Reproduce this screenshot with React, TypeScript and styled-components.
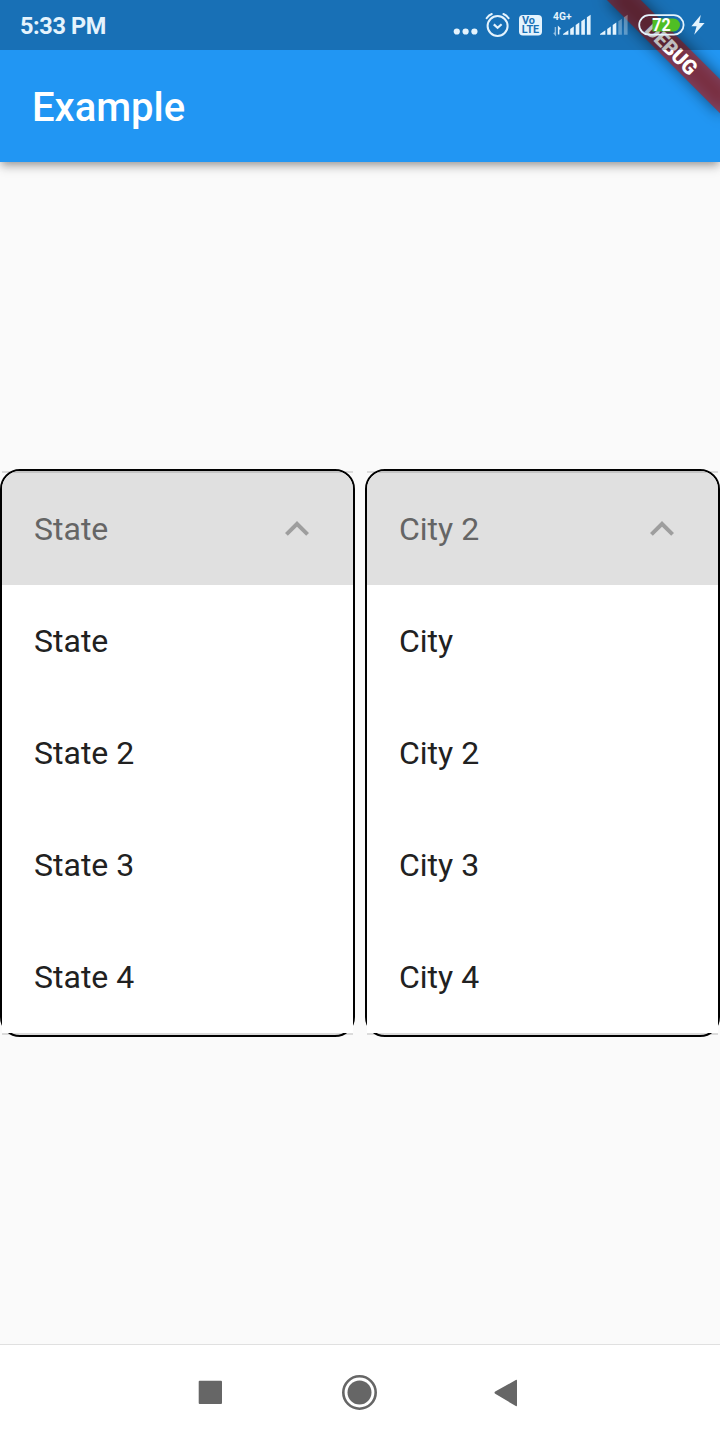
import React from 'react';
import styled, { createGlobalStyle } from 'styled-components';

const GlobalStyle = createGlobalStyle`
  * { box-sizing: border-box; }
  body { margin: 0; background: #fafafa; font-family: Roboto, sans-serif; }
`;

const Screen = styled.div`
  position: relative;
  display: flex;
  flex-direction: column;
  width: 720px;
  height: 1440px;
  overflow: hidden;
  background: #fafafa;
`;

const StatusBar = styled.div`
  position: relative;
  z-index: 3;
  flex: none;
  display: flex;
  align-items: center;
  height: 50px;
  margin-bottom: -50px;
  padding: 0 14px 0 20px;
  background: rgba(0, 0, 0, 0.25);
`;

const Clock = styled.span`
  flex: 1;
  padding-top: 2px;
  font-size: 23.5px;
  font-weight: 700;
  line-height: 28px;
  letter-spacing: -0.4px;
  color: #e4f3fd;
`;

const StatusIcons = styled.div`
  display: flex;
  height: 50px;
`;

const StatusGlyph = styled.svg`
  display: block;
  height: 50px;
  overflow: visible;
  font-family: Roboto, sans-serif;
  font-weight: 700;
`;

const AppBar = styled.header`
  position: relative;
  z-index: 1;
  flex: none;
  display: flex;
  align-items: center;
  height: 162px;
  padding: 54px 32px 0;
  background: #2196f3;
  box-shadow: 0 4px 8px -2px rgba(0, 0, 0, 0.3), 0 6px 10px rgba(0, 0, 0, 0.14);
`;

const Title = styled.h1`
  margin: 0;
  font-size: 40px;
  font-weight: 500;
  line-height: 48px;
  color: #fff;
`;

const Banner = styled.div`
  position: absolute;
  z-index: 2;
  top: 0;
  left: 720px;
  width: 0;
  height: 0;
  transform: rotate(45deg);
`;

const BannerShadow = styled.div`
  position: absolute;
  left: -80px;
  top: 56px;
  width: 160px;
  height: 24px;
  background: rgba(0, 0, 0, 0.5);
  filter: blur(7.4px);
`;

const BannerLabel = styled.div`
  position: absolute;
  left: -80px;
  top: 56px;
  width: 160px;
  height: 24px;
  background: rgba(183, 28, 28, 0.627);
  font-size: 20.4px;
  font-weight: 900;
  line-height: 26px;
  letter-spacing: -0.3px;
  text-align: center;
  color: #fff;
`;

const Content = styled.main`
  flex: 1;
  display: flex;
  align-items: center;
  gap: 10px;
`;

const Card = styled.section`
  position: relative;
  flex: 1;
  height: 568px;
  border: 2px solid #000;
  border-radius: 20px;
`;

const CardHeader = styled.div`
  display: flex;
  align-items: center;
  justify-content: space-between;
  height: 114px;
  padding: 2px 32px 0;
  border-radius: 18px 18px 0 0;
  background: #e0e0e0;
  font-size: 32px;
  color: #656565;
`;

const Chevron = styled.svg`
  display: block;
  width: 48px;
  height: 48px;
`;

const Options = styled.ul`
  position: relative;
  margin: 0;
  padding: 0;
  list-style: none;
  background: #fff;
`;

const Option = styled.li`
  display: flex;
  align-items: center;
  height: 112px;
  padding: 0 32px;
  font-size: 32px;
  color: #212121;
`;

const Divider = styled.div<{ $edge: 'top' | 'bottom' }>`
  position: absolute;
  left: 0;
  right: 0;
  ${(p) => p.$edge}: 0;
  height: 2px;
  background: rgba(0, 0, 0, 0.12);
`;

const NavBar = styled.nav`
  flex: none;
  display: flex;
  align-items: center;
  justify-content: center;
  gap: 108px;
  height: 96px;
  border-top: 1px solid #e0e0e0;
  background: #fff;
`;

const NavIcon = styled.svg`
  display: block;
  width: 40px;
  height: 40px;
`;

const INK = '#e4f3fd';

function Dropdown({ value, options }: { value: string; options: string[] }) {
  return (
    <Card>
      <CardHeader>
        <span>{value}</span>
        <Chevron viewBox="0 0 24 24">
          <path d="M12 8l-6 6 1.41 1.41L12 10.83l4.59 4.58L18 14z" fill="#9e9e9e" />
        </Chevron>
      </CardHeader>
      <Options>
        {options.map((o) => (
          <Option key={o}>{o}</Option>
        ))}
      </Options>
      <Divider $edge="top" />
      <Divider $edge="bottom" />
    </Card>
  );
}

// Bars are slices of one rising wedge; the first slice is the wedge's tip.
const BARS = [
  [0, 5.4],
  [7.2, 10.8],
  [12.7, 16.3],
  [18.3, 21.9],
  [23.9, 27.6],
];

function SignalBars({ x, filled }: { x: number; filled: number }) {
  return (
    <>
      {BARS.map(([a, b], i) => (
        <path
          key={a}
          d={`M${x + a} ${34 - a * 0.7}L${x + b} ${34 - b * 0.7}V34.8H${x + a}z`}
          fill={INK}
          opacity={i < filled ? 1 : 0.35}
        />
      ))}
    </>
  );
}

export default function App() {
  return (
    <>
      <GlobalStyle />
      <Screen>
        <StatusBar>
          <Clock>5:33 PM</Clock>
          <StatusIcons>
            <StatusGlyph width="30" viewBox="453 0 30 50" fill={INK}>
              <circle cx="456.8" cy="31.5" r="3.1" />
              <circle cx="465.6" cy="31.5" r="3.1" />
              <circle cx="474.4" cy="31.5" r="3.1" />
            </StatusGlyph>
            <StatusGlyph width="33" viewBox="483 0 33 50" fill="none" stroke={INK} strokeWidth="2">
              <circle cx="497.6" cy="26" r="10" />
              <path d="M493.8 24.4l3.8 3.4 4-3.6" strokeWidth="2.2" />
              <path d="M486.6 18.2q2-3 5.2-4.2M508.6 18.2q-2-3-5.2-4.2" strokeLinecap="round" />
            </StatusGlyph>
            <StatusGlyph width="34" viewBox="516 0 34 50">
              <rect x="519" y="15" width="23" height="20.5" rx="4" fill={INK} />
              <text x="522" y="24.4" fontSize="10" textLength="13" lengthAdjust="spacingAndGlyphs" fill="#1a71b6">Vo</text>
              <text x="521.8" y="33.4" fontSize="10" textLength="17.4" lengthAdjust="spacingAndGlyphs" fill="#1a71b6">LTE</text>
            </StatusGlyph>
            <StatusGlyph width="48" viewBox="550 0 48 50">
              <text x="553" y="20" fontSize="10" textLength="18.5" lengthAdjust="spacingAndGlyphs" fill={INK}>4G+</text>
              <path d="M555.4 27v7.6l-1.6-1.8" fill="none" stroke={INK} strokeWidth="1.4" opacity="0.6" />
              <path d="M558.6 34.6V27.4l1.8 1.8" fill="none" stroke={INK} strokeWidth="1.5" />
              <SignalBars x={563} filled={5} />
            </StatusGlyph>
            <StatusGlyph width="38" viewBox="598 0 38 50">
              <SignalBars x={600} filled={3} />
            </StatusGlyph>
            <StatusGlyph width="52" viewBox="636 0 52 50">
              <path d="M652.5 18.5h21a6.5 6.5 0 0 1 0 13h-21z" fill="#4fbe25" />
              <rect x="639.2" y="15.2" width="44.4" height="19.4" rx="9.7" fill="none" stroke={INK} strokeWidth="1.8" />
              <text x="652.2" y="31.2" fontSize="18" textLength="18.4" lengthAdjust="spacingAndGlyphs" fill="#fff">72</text>
            </StatusGlyph>
            <StatusGlyph width="18" viewBox="688 0 18 50">
              <path d="M700.8 15L691.4 26.2h5.2L694.2 34.8 704.6 23h-5.4z" fill={INK} />
            </StatusGlyph>
          </StatusIcons>
        </StatusBar>
        <AppBar>
          <Title>Example</Title>
        </AppBar>
        <Banner>
          <BannerShadow />
          <BannerLabel>DEBUG</BannerLabel>
        </Banner>
        <Content>
          <Dropdown value="State" options={['State', 'State 2', 'State 3', 'State 4']} />
          <Dropdown value="City 2" options={['City', 'City 2', 'City 3', 'City 4']} />
        </Content>
        <NavBar>
          <NavIcon viewBox="192 1373 40 40">
            <rect x="198.7" y="1380.7" width="23.3" height="23.2" rx="1" fill="#666" />
          </NavIcon>
          <NavIcon viewBox="340 1373 40 40" fill="#666">
            <circle cx="359.5" cy="1392.5" r="16.2" fill="none" stroke="#666" strokeWidth="2.6" />
            <circle cx="359.5" cy="1392.5" r="12" />
          </NavIcon>
          <NavIcon viewBox="488 1373 40 40">
            <path d="M495.2 1391.6L515.8 1380q1.2-.6 1.2.8v24.4q0 1.4-1.2.8L495.2 1393.8q-1.4-1 0-2.2z" fill="#666" />
          </NavIcon>
        </NavBar>
      </Screen>
    </>
  );
}
